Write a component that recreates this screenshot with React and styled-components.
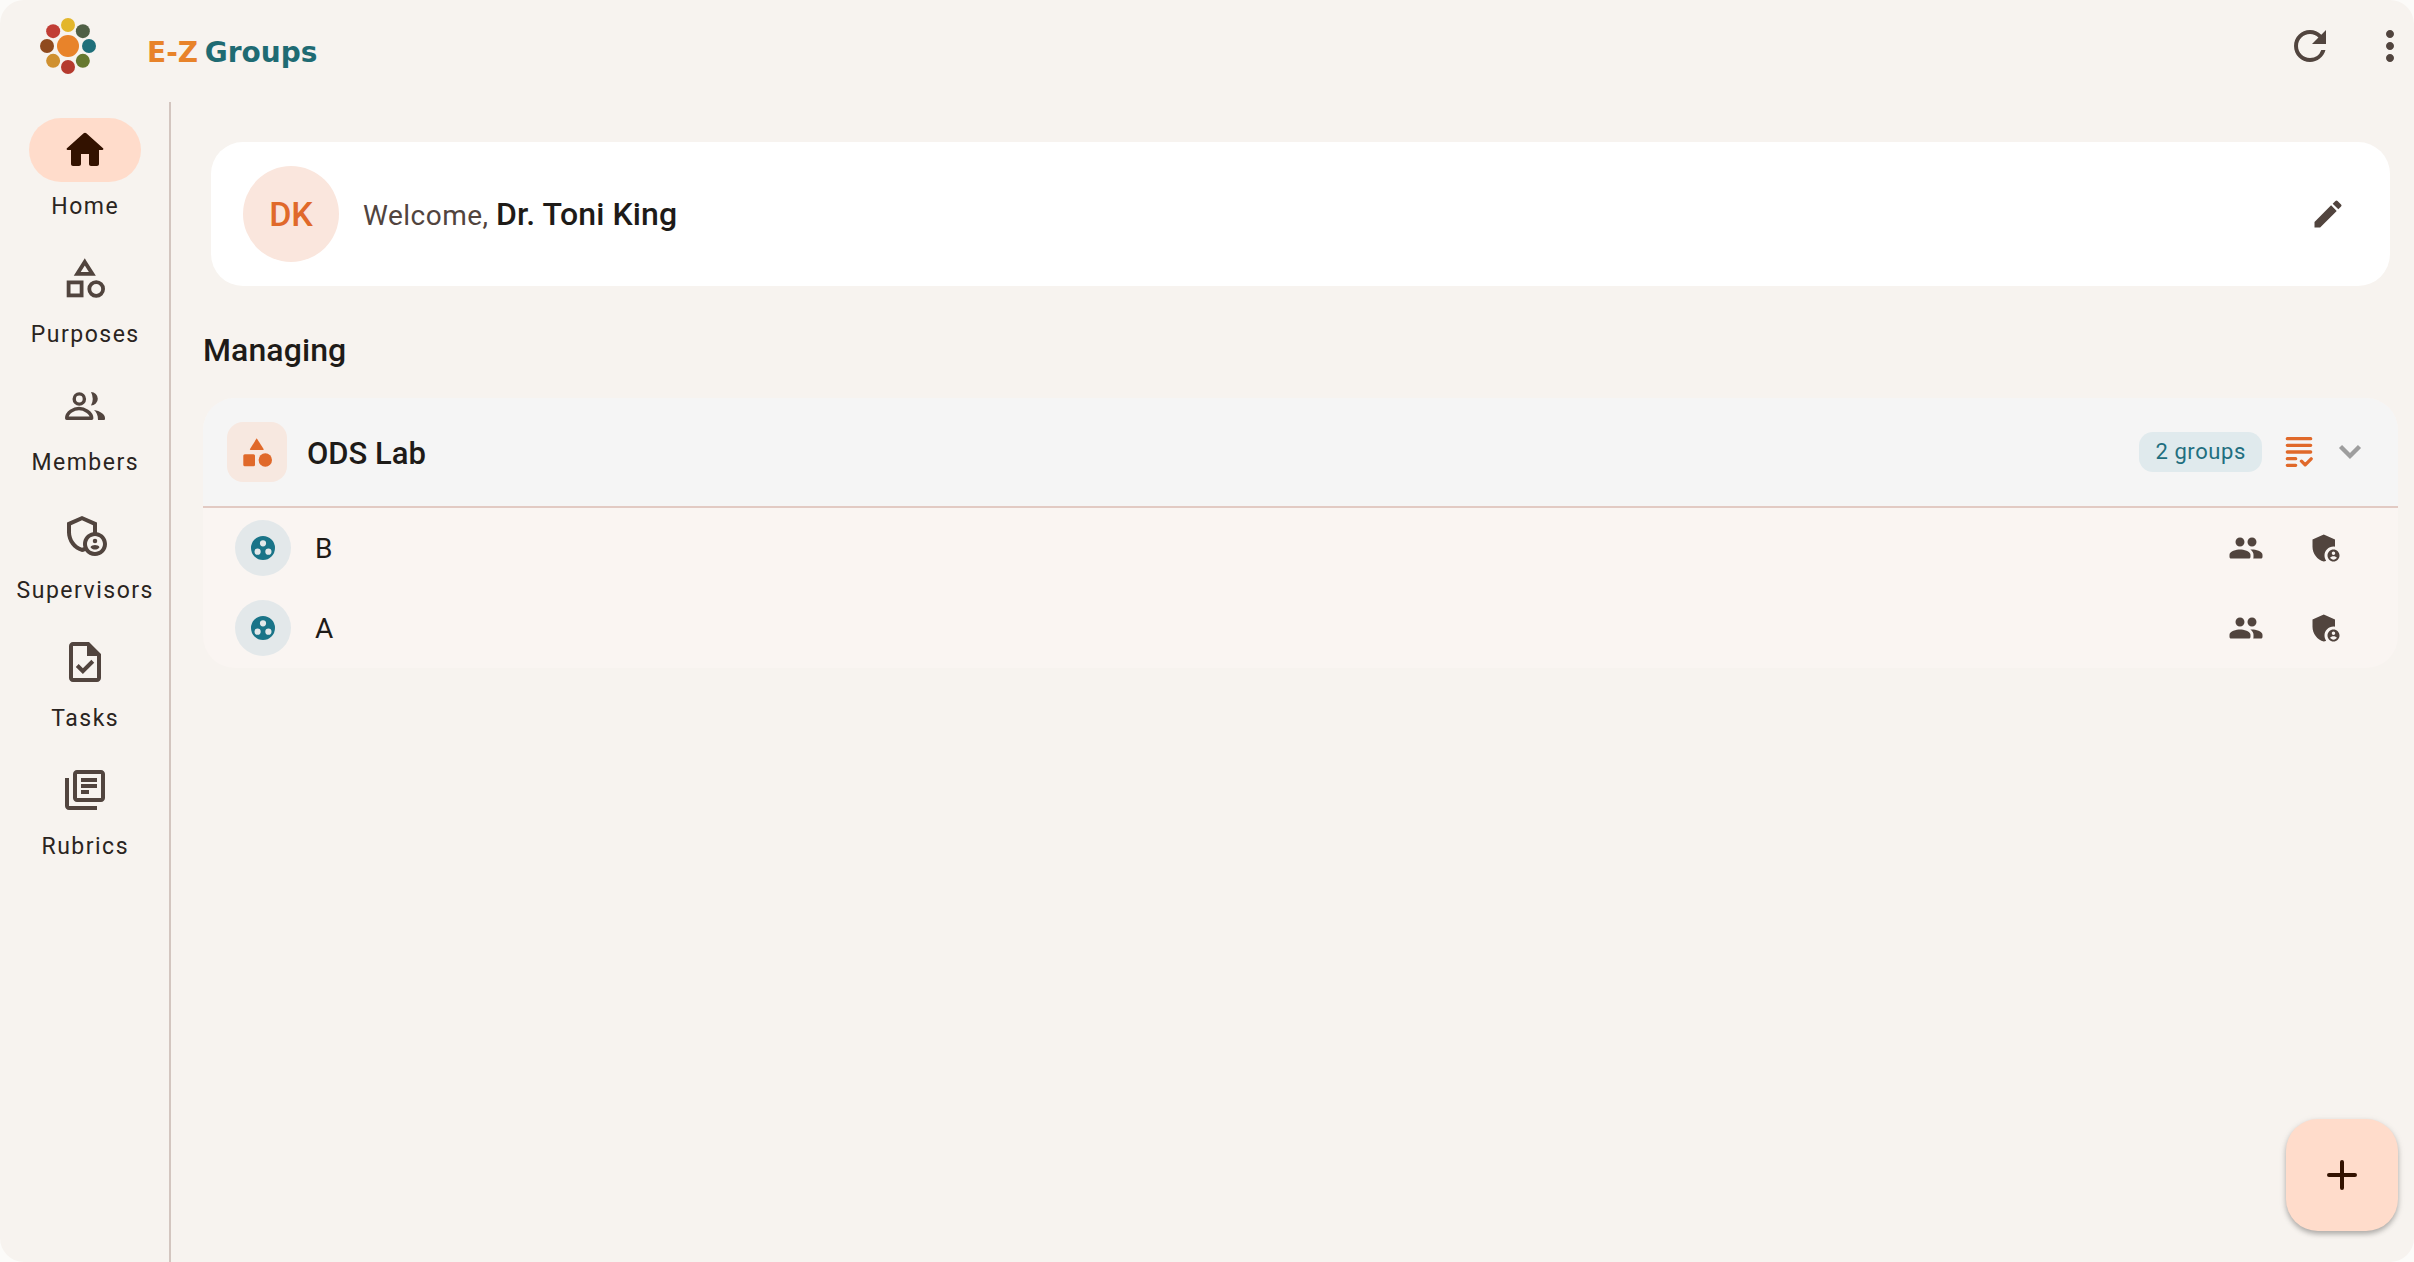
import React from 'react';
import styled, { createGlobalStyle } from 'styled-components';
import {
  MdEdit,
  MdMoreVert,
  MdOutlineAdminPanelSettings,
  MdOutlineLibraryBooks,
  MdOutlineTask,
  MdAdminPanelSettings,
  MdRefresh,
} from 'react-icons/md';

const GlobalStyle = createGlobalStyle`
  html, body {
    margin: 0;
    padding: 0;
    height: 100%;
    background: #fcfbf9;
  }
  * {
    box-sizing: border-box;
  }
`;

const Page = styled.div`
  display: flex;
  flex-direction: column;
  height: 100vh;
  overflow: hidden;
  position: relative;
  background: #f7f3ef;
  border-radius: 24px;
  font-family: Roboto, 'Liberation Sans', sans-serif;
  color: #1e1b18;
`;

const TopBar = styled.header`
  display: flex;
  align-items: center;
  flex: 0 0 102px;
  height: 102px;
  padding: 0 0 10px 40px;
`;

const LogoText = styled.div`
  margin: 13px 0 0 51px;
  font-family: 'DejaVu Sans', sans-serif;
  font-size: 28px;
  font-weight: 700;
  word-spacing: -3px;
  white-space: nowrap;
`;

const LogoPart = styled.span`
  color: ${p => p.$color};
`;

const TopActions = styled.div`
  display: flex;
  align-items: center;
  gap: 32px;
  margin-left: auto;
  color: #51443e;
  font-size: 48px;
  line-height: 0;
`;

const Body = styled.div`
  display: flex;
  flex: 1;
  min-height: 0;
`;

const Sidebar = styled.nav`
  display: flex;
  flex-direction: column;
  align-items: center;
  flex: 0 0 171px;
  padding-top: 16px;
  border-right: 2px solid #d3c5bf;
`;

const NavItem = styled.div`
  display: flex;
  flex-direction: column;
  align-items: center;
  height: 128px;
`;

const NavIcon = styled.div`
  display: flex;
  align-items: center;
  justify-content: center;
  width: 112px;
  height: 64px;
  border-radius: 32px;
  font-size: 48px;
  color: ${p => (p.$active ? '#331200' : '#51443e')};
  background: ${p => (p.$active ? '#ffdccb' : 'transparent')};
`;

const NavLabel = styled.div`
  margin-top: 8px;
  padding-left: 1.5px;
  font-size: 23px;
  line-height: 34px;
  letter-spacing: 1.5px;
  color: #2a2421;
`;

const Main = styled.main`
  flex: 1;
  min-width: 0;
  padding: 40px 16px 0 32px;
`;

const WelcomeCard = styled.section`
  display: flex;
  align-items: center;
  height: 144px;
  margin: 0 8px;
  padding: 0 32px;
  background: #fff;
  border-radius: 32px;
`;

const Avatar = styled.div`
  display: flex;
  align-items: center;
  justify-content: center;
  flex: 0 0 96px;
  height: 96px;
  border-radius: 50%;
  background: #fae6dd;
  color: #e0692a;
  font-size: 34px;
  font-weight: 500;
`;

const WelcomeText = styled.div`
  margin-left: 24px;
  font-size: 28px;
  letter-spacing: 0.5px;
  color: #51443e;
`;

const UserName = styled.span`
  font-size: 32px;
  font-weight: 500;
  letter-spacing: 0.1px;
  color: #1e1b18;
`;

const EditButton = styled.div`
  margin-left: auto;
  margin-right: 12px;
  font-size: 36px;
  line-height: 0;
  color: #51443e;
`;

const SectionTitle = styled.h2`
  margin: 42px 0 0;
  height: 70px;
  font-size: 32px;
  font-weight: 500;
  line-height: 44px;
  letter-spacing: 0.1px;
`;

const Panel = styled.section`
  border-radius: 32px;
  overflow: hidden;
  background: #faf5f2;
`;

const PanelHeader = styled.div`
  display: flex;
  align-items: center;
  height: 110px;
  padding: 0 30px 0 24px;
  background: #f5f5f5;
  border-bottom: 2px solid #e2cac3;
`;

const SquareIcon = styled.div`
  display: flex;
  align-items: center;
  justify-content: center;
  flex: 0 0 60px;
  height: 60px;
  border-radius: 16px;
  background: #f7e8e0;
  color: #e0692a;
`;

const PanelTitle = styled.div`
  margin: 2px 0 0 20px;
  font-size: 31px;
  font-weight: 500;
`;

const Chip = styled.div`
  margin-left: auto;
  height: 40px;
  padding: 0 16px;
  border-radius: 14px;
  background: #e0eaed;
  color: #1f6f80;
  font-size: 22px;
  line-height: 40px;
  letter-spacing: 0.6px;
`;

const HeaderIcon = styled.div`
  display: flex;
  margin-left: ${p => p.$gap}px;
  color: ${p => p.$color};
`;

const Row = styled.div`
  display: flex;
  align-items: center;
  height: 80px;
  padding: 0 54px 0 32px;
`;

const RowAvatar = styled.div`
  display: flex;
  align-items: center;
  justify-content: center;
  flex: 0 0 56px;
  height: 56px;
  border-radius: 50%;
  background: #e3e8ea;
`;

const RowTitle = styled.div`
  margin-left: 24px;
  font-size: 28px;
`;

const RowActions = styled.div`
  display: flex;
  gap: 44px;
  margin-left: auto;
  color: #51443e;
  font-size: 36px;
  line-height: 0;
`;

const Fab = styled.button`
  position: absolute;
  right: 16px;
  bottom: 31px;
  display: flex;
  align-items: center;
  justify-content: center;
  width: 112px;
  height: 112px;
  padding: 0;
  border: none;
  border-radius: 32px;
  background: #ffdccb;
  box-shadow: 0 3px 5px rgba(0, 0, 0, 0.25), 0 2px 8px rgba(0, 0, 0, 0.08);
`;

const LOGO_DOTS = [
  { a: 0, color: '#e3b62b' },
  { a: 45, color: '#4f5f45' },
  { a: 90, color: '#1f6f7a' },
  { a: 135, color: '#66782f' },
  { a: 180, color: '#b53a2e' },
  { a: 225, color: '#cf9030' },
  { a: 270, color: '#8f4a1e' },
  { a: 315, color: '#c13d35' },
];

const Logo = () => (
  <svg width="56" height="56" viewBox="0 0 56 56">
    <circle cx="28" cy="28" r="11" fill="#e8832a" />
    {LOGO_DOTS.map(d => (
      <circle
        key={d.a}
        cx={28 + 21 * Math.sin((d.a * Math.PI) / 180)}
        cy={28 - 21 * Math.cos((d.a * Math.PI) / 180)}
        r="7"
        fill={d.color}
      />
    ))}
  </svg>
);

const HomeIcon = () => (
  <svg width="48" height="48" viewBox="0 0 24 24" fill="currentColor">
    <path d="M10 19v-5h4v5c0 .55.45 1 1 1h3c.55 0 1-.45 1-1v-7h1.7c.46 0 .68-.57.33-.87L12.67 3.6c-.38-.34-.96-.34-1.34 0l-8.36 7.53c-.34.3-.13.87.33.87H5v7c0 .55.45 1 1 1h3c.55 0 1-.45 1-1z" />
  </svg>
);

const ShapesOutline = () => (
  <svg width="48" height="48" viewBox="0 0 48 48" fill="none" stroke="currentColor" strokeWidth="3.8">
    <path d="M23.8 7.9L31.4 19.9H16.2z" />
    <rect x="7.6" y="28.4" width="13" height="13" />
    <circle cx="35.2" cy="35" r="6.9" />
  </svg>
);

const ShapesFilled = () => (
  <svg width="36" height="36" viewBox="0 0 36 36" fill="currentColor">
    <path d="M17.7 4.3L24.6 15a.7.7 0 0 1-.6 1H11.6a.7.7 0 0 1-.6-1z" />
    <rect x="4.3" y="20.3" width="11.7" height="12" rx="1.5" />
    <circle cx="26.3" cy="26" r="6.7" />
  </svg>
);

const MembersOutline = () => (
  <svg width="48" height="48" viewBox="0 0 48 48" fill="currentColor">
    <circle cx="18.3" cy="17" r="5.1" fill="none" stroke="currentColor" strokeWidth="3.4" />
    <path d="M30 10A6.8 6.8 0 0 1 30 23.6Q33.5 17 30 10z" />
    <path
      d="M5.7 36.3C5.7 30.5 13 26.5 18 26.5S30.7 30.5 30.7 36.3z"
      fill="none"
      stroke="currentColor"
      strokeWidth="3.4"
      strokeLinejoin="round"
    />
    <path d="M33 28C39 29 44 32 44 36V37a1 1 0 0 1-1 1H37C37 33 35.5 30 33 28z" />
  </svg>
);

const GroupIcon = () => (
  <svg width="36" height="36" viewBox="0 0 24 24" fill="currentColor">
    <path d="M16 11c1.66 0 2.99-1.34 2.99-3S17.66 5 16 5s-3 1.34-3 3 1.34 3 3 3zm-8 0c1.66 0 2.99-1.34 2.99-3S9.66 5 8 5 5 6.34 5 8s1.34 3 3 3zm0 2c-2.33 0-7 1.17-7 3.5V18c0 .55.45 1 1 1h12c.55 0 1-.45 1-1v-1.5c0-2.33-4.67-3.5-7-3.5zm8 0c-.29 0-.62.02-.97.05.02.01.03.03.04.04 1.14.83 1.93 1.94 1.93 3.41V18c0 .35-.07.69-.18 1H22c.55 0 1-.45 1-1v-1.5c0-2.33-4.67-3.5-7-3.5z" />
  </svg>
);

const GradingIcon = () => (
  <svg width="40" height="40" viewBox="0 0 24 24" fill="none" stroke="currentColor" strokeWidth="2" strokeLinecap="round" strokeLinejoin="round">
    <path d="M5 4h14M5 8h14M5 12h14M5 16h5M5 20h5M13.5 17.5l2.2 2.2 3.6-3.6" />
  </svg>
);

const ChevronIcon = () => (
  <svg width="36" height="36" viewBox="0 0 36 36" fill="none" stroke="currentColor" strokeWidth="4.4">
    <path d="M8.5 12.5L18 22l9.5-9.5" />
  </svg>
);

const GroupDots = () => (
  <svg width="24" height="24" viewBox="0 0 24 24">
    <path
      fill="#1a7488"
      fillRule="evenodd"
      d="M12 0a12 12 0 1 0 0 24a12 12 0 1 0 0-24zM12 4.2a3.1 3.1 0 1 1 0 6.2a3.1 3.1 0 1 1 0-6.2zM6.6 12.6a3.1 3.1 0 1 1 0 6.2a3.1 3.1 0 1 1 0-6.2zM17.4 12.6a3.1 3.1 0 1 1 0 6.2a3.1 3.1 0 1 1 0-6.2z"
    />
  </svg>
);

const PlusIcon = () => (
  <svg width="48" height="48" viewBox="0 0 48 48" fill="none" stroke="#331200" strokeWidth="4" strokeLinecap="round">
    <path d="M24 11v26M11 24h26" />
  </svg>
);

const NAV_ITEMS = [
  { label: 'Home', icon: <HomeIcon />, active: true },
  { label: 'Purposes', icon: <ShapesOutline /> },
  { label: 'Members', icon: <MembersOutline /> },
  { label: 'Supervisors', icon: <MdOutlineAdminPanelSettings /> },
  { label: 'Tasks', icon: <MdOutlineTask /> },
  { label: 'Rubrics', icon: <MdOutlineLibraryBooks /> },
];

const GROUPS = ['B', 'A'];

export default function App() {
  return (
    <Page>
      <GlobalStyle />
      <TopBar>
        <Logo />
        <LogoText>
          <LogoPart $color="#e8832a">E-Z</LogoPart> <LogoPart $color="#1f6b73">Groups</LogoPart>
        </LogoText>
        <TopActions>
          <MdRefresh />
          <MdMoreVert />
        </TopActions>
      </TopBar>
      <Body>
        <Sidebar>
          {NAV_ITEMS.map(item => (
            <NavItem key={item.label}>
              <NavIcon $active={item.active}>{item.icon}</NavIcon>
              <NavLabel>{item.label}</NavLabel>
            </NavItem>
          ))}
        </Sidebar>
        <Main>
          <WelcomeCard>
            <Avatar>DK</Avatar>
            <WelcomeText>
              Welcome, <UserName>Dr. Toni King</UserName>
            </WelcomeText>
            <EditButton>
              <MdEdit />
            </EditButton>
          </WelcomeCard>
          <SectionTitle>Managing</SectionTitle>
          <Panel>
            <PanelHeader>
              <SquareIcon>
                <ShapesFilled />
              </SquareIcon>
              <PanelTitle>ODS Lab</PanelTitle>
              <Chip>2 groups</Chip>
              <HeaderIcon $gap={17} $color="#e0692a">
                <GradingIcon />
              </HeaderIcon>
              <HeaderIcon $gap={13} $color="#9e9e9e">
                <ChevronIcon />
              </HeaderIcon>
            </PanelHeader>
            {GROUPS.map(name => (
              <Row key={name}>
                <RowAvatar>
                  <GroupDots />
                </RowAvatar>
                <RowTitle>{name}</RowTitle>
                <RowActions>
                  <GroupIcon />
                  <MdAdminPanelSettings />
                </RowActions>
              </Row>
            ))}
          </Panel>
        </Main>
      </Body>
      <Fab>
        <PlusIcon />
      </Fab>
    </Page>
  );
}
